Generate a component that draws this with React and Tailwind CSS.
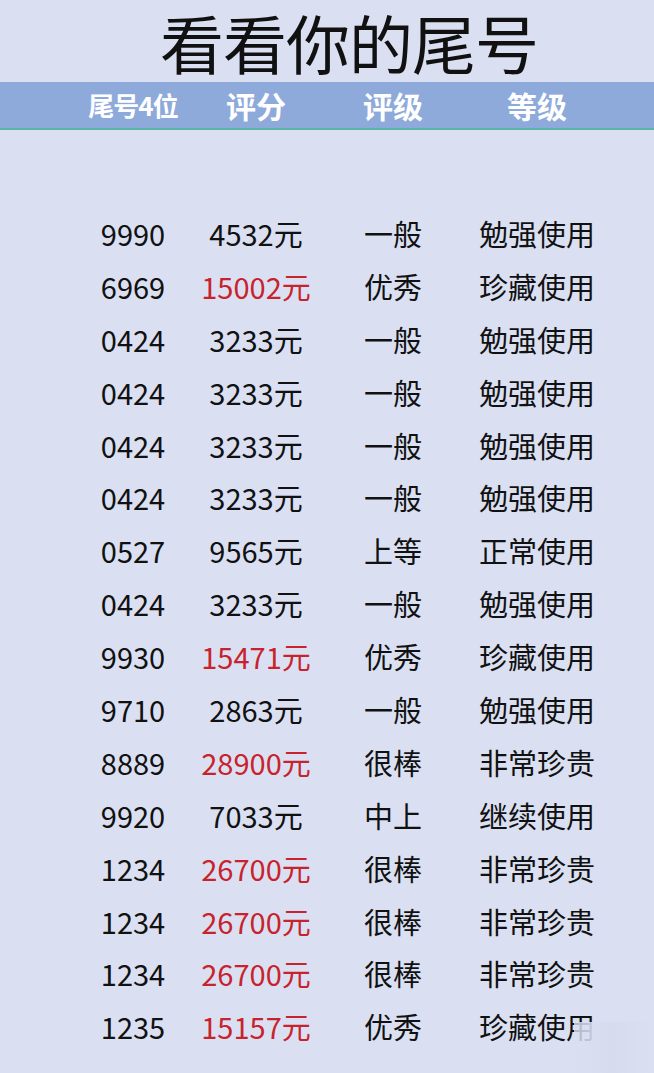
const rows = [
  ["9990", "4532元", false, "一般", "勉强使用"],
  ["6969", "15002元", true, "优秀", "珍藏使用"],
  ["0424", "3233元", false, "一般", "勉强使用"],
  ["0424", "3233元", false, "一般", "勉强使用"],
  ["0424", "3233元", false, "一般", "勉强使用"],
  ["0424", "3233元", false, "一般", "勉强使用"],
  ["0527", "9565元", false, "上等", "正常使用"],
  ["0424", "3233元", false, "一般", "勉强使用"],
  ["9930", "15471元", true, "优秀", "珍藏使用"],
  ["9710", "2863元", false, "一般", "勉强使用"],
  ["8889", "28900元", true, "很棒", "非常珍贵"],
  ["9920", "7033元", false, "中上", "继续使用"],
  ["1234", "26700元", true, "很棒", "非常珍贵"],
  ["1234", "26700元", true, "很棒", "非常珍贵"],
  ["1234", "26700元", true, "很棒", "非常珍贵"],
  ["1235", "15157元", true, "优秀", "珍藏使用"],
];

const font = { fontFamily: '"Noto Sans CJK SC", "Noto Sans", sans-serif' };

export default function App() {
  return (
    <div className="w-[654px] h-[1073px] bg-[#dae0f2] overflow-hidden relative text-[#111]" style={font}>
      {/* title */}
      <div className="h-[82px] flex items-center justify-center pl-[44px]">
        <h1 className="text-[64px] leading-[72px] font-normal tracking-[-1px]">看看你的尾号</h1>
      </div>

      {/* header bar */}
      <div className="h-[48px] bg-[#8eaadb] border-b-2 border-[#5bb3a4] grid grid-cols-[66px_134px_112px_162px_126px] items-center text-white font-bold leading-[40px]">
        <div />
        <div className="text-center text-[26px] tracking-[-1px]">尾号4位</div>
        <div className="text-center text-[30px]">评分</div>
        <div className="text-center text-[30px]">评级</div>
        <div className="text-center text-[30px]">等级</div>
      </div>

      {/* rows */}
      <div className="pt-[77px]">
        {rows.map(([num, score, hot, rate, grade], i) => (
          <div key={i} className="h-[52.9px] grid grid-cols-[66px_134px_112px_162px_126px] items-center text-[29px] leading-none">
            <div />
            <div className="text-center">{num}</div>
            <div className={`text-center ${hot ? "text-[#c8232c]" : ""}`}>{score}</div>
            <div className="text-center">{rate}</div>
            <div className="text-center">{grade}</div>
          </div>
        ))}
      </div>

      {/* watermark smudge over last cell */}
      <div className="absolute left-[574px] top-[1022px] w-[80px] h-[51px] bg-gradient-to-r from-[#dae0f2]/80 via-[#d6dcee] to-[#dae0f2]" />
    </div>
  );
}
